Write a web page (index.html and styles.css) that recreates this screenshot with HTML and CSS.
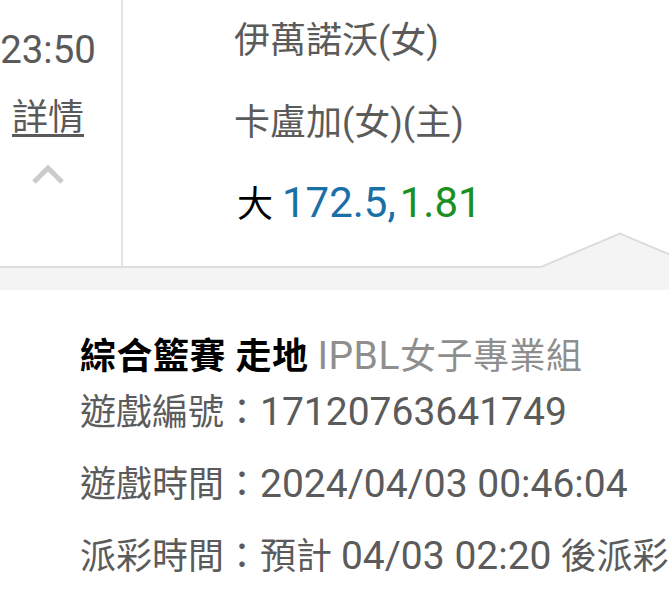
FILE: index.html
```html
<!DOCTYPE html>
<html lang="zh-Hant">
<head>
<meta charset="utf-8">
<title>注單詳情</title>
<link rel="stylesheet" href="styles.css">
</head>
<body>
<div class="page">
  <section class="match">
    <div class="side">
      <div class="time">23:50</div>
      <a class="detail" href="#">詳情</a>
      <svg class="chev" width="32" height="20" viewBox="0 0 32 20" aria-hidden="true">
        <polyline points="2,18 16,4 30,18" fill="none" stroke="#cbcbcb" stroke-width="5"/>
      </svg>
    </div>
    <div class="teams">
      <div class="line">伊萬諾沃(女)</div>
      <div class="line">卡盧加(女)(主)</div>
      <div class="line bet">大 <span class="odds blue">172.5,</span><span class="odds green">1.81</span></div>
    </div>
  </section>
  <section class="details">
    <svg class="caret" width="156" height="36" viewBox="0 0 156 36" aria-hidden="true">
      <polygon points="0,34.5 78,1.5 156,34.5 156,36 0,36" fill="#f4f4f4"/>
      <polyline points="0,34.5 78,1.5 156,34.5" fill="none" stroke="#dcdcdc" stroke-width="2"/>
    </svg>
    <div class="card">
      <div class="title"><b>綜合籃賽 走地</b> <span class="league"><span class="n">IPBL</span>女子專業組</span></div>
      <div class="row">遊戲編號：<span class="n">17120763641749</span></div>
      <div class="row">遊戲時間：<span class="n">2024/04/03 00:46:04</span></div>
      <div class="row">派彩時間：預計 <span class="n">04/03 02:20</span> 後派彩</div>
    </div>
  </section>
</div>
</body>
</html>
```

FILE: styles.css
```css
html, body {
  margin: 0;
  padding: 0;
  background: #ffffff;
  overflow: hidden;
}

body {
  font-family: Roboto, "Noto Sans CJK TC", "Noto Sans", sans-serif;
  font-size: 36px;
  color: #5b5b5b;
}

.page {
  width: 669px;
  height: 595px;
  overflow: hidden;
}

.n {
  font-size: 39px;
  line-height: 1;
}

.odds {
  font-size: 42px;
  line-height: 1;
}

.match {
  display: flex;
  height: 266px;
  border-bottom: 2px solid #dddddd;
  background: #ffffff;
}

.side {
  width: 96px;
  padding-right: 25px;
  border-right: 2px solid #e4e4e4;
  display: flex;
  flex-direction: column;
  align-items: center;
}

.time {
  font-size: 38.4px;
  line-height: 44px;
  margin-top: 28px;
  color: #5a5a5a;
}

.detail {
  margin-top: 24px;
  line-height: 44px;
  color: #5a5a5a;
  text-decoration: underline;
  text-decoration-thickness: 3px;
  text-underline-offset: 4px;
}

.chev {
  margin-top: 24px;
  display: block;
}

.teams {
  padding-left: 111px;
  display: flex;
  flex-direction: column;
}

.line {
  line-height: 82px;
  white-space: nowrap;
  color: #5b5b5b;
}

.bet {
  padding-left: 3px;
  color: #000000;
}

.blue {
  color: #1a6fa6;
}

.green {
  color: #1b8f22;
  margin-left: 4px;
}

.details {
  position: relative;
  background: #f4f4f4;
  padding-top: 22px;
}

.caret {
  position: absolute;
  left: 542px;
  top: -36px;
  display: block;
}

.card {
  background: #ffffff;
  padding: 47px 0 0 80px;
  height: 400px;
  white-space: nowrap;
}

.title {
  line-height: 40px;
  color: #000000;
}

.title b {
  font-weight: 700;
  letter-spacing: 0.5px;
}

.league {
  color: #8e8e8e;
  letter-spacing: 0.5px;
}

.row {
  line-height: 72px;
  color: #5b5b5b;
}
```
